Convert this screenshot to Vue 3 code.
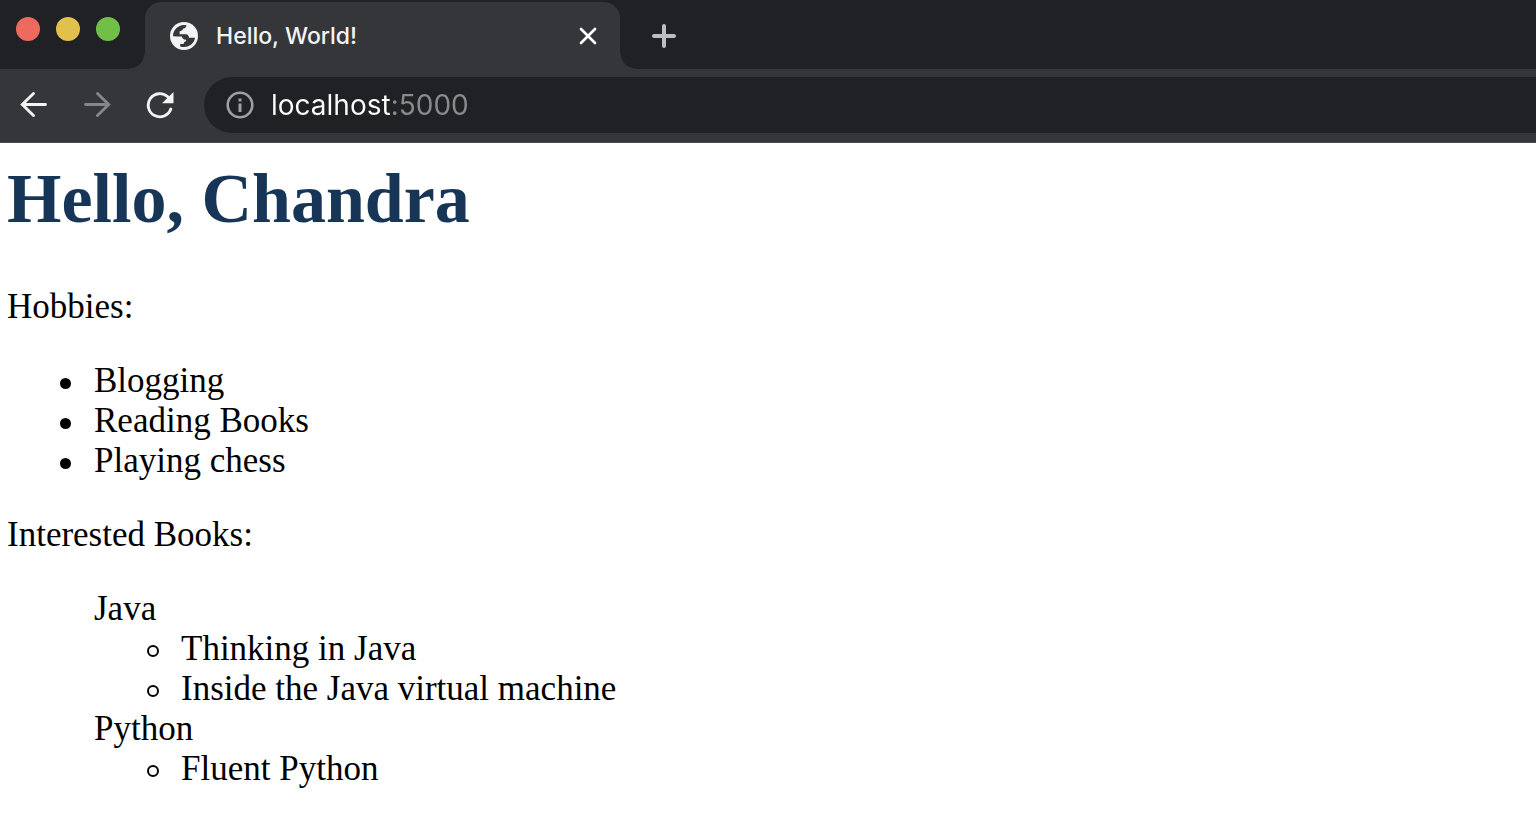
<script setup>
import { ref } from 'vue'

const address = ref('localhost:5000')
const hobbies = ['Blogging', 'Reading Books', 'Playing chess']
const books = [
  { topic: 'Java', titles: ['Thinking in Java', 'Inside the Java virtual machine'] },
  { topic: 'Python', titles: ['Fluent Python'] },
]
</script>

<template>
  <div class="browser">
    <header class="chrome">
      <div class="tab-strip">
        <div class="window-controls">
          <button class="light red" aria-label="Close window"></button>
          <button class="light yellow" aria-label="Minimize window"></button>
          <button class="light green" aria-label="Zoom window"></button>
        </div>
        <div class="tab">
          <svg class="favicon" viewBox="0 0 28 28" aria-hidden="true">
            <circle cx="14" cy="14" r="14" fill="#f1f3f4" />
            <path fill="#35363a" d="M3 14.2C3 8 8 3 14 3c1.200 0 2 .2 2.600.5-.3 1.500-1.300 3-3.600 3.300-.3 1.600-1.500 2.400-3.400 2.500v2.900h6.200c2.100 0 3 1.500 3.200 3.500h6C24.500 20.500 20 25 14 25c-1.500 0-2.700-.2-3.800-.6v-2.300h3.400c.2-1.900 1.100-2.700 2.500-2.900v-1.500c-2.600-.2-4-1.300-4.200-3.200C9 14.500 6 14.200 3 14.200z" />
          </svg>
          <span class="tab-title">Hello, World!</span>
          <button class="icon-button" aria-label="Close tab">
            <svg class="close-icon" viewBox="0 0 18 18" fill="none" stroke="#fff" stroke-width="2.700" stroke-linecap="round">
              <path d="M2 2l14 14M16 2L2 16" />
            </svg>
          </button>
        </div>
        <button class="icon-button new-tab" aria-label="New tab">
          <svg class="plus-icon" viewBox="0 0 24 24" fill="none" stroke="#bdbec4" stroke-width="4" stroke-linecap="round">
            <path d="M12 2v20M2 12h20" />
          </svg>
        </button>
      </div>

      <div class="toolbar">
        <nav class="nav-buttons" aria-label="Navigation">
          <button class="icon-button" aria-label="Back">
            <svg class="nav-icon" viewBox="0 0 28 28" fill="none" stroke="#f1f3f4" stroke-width="2.900" stroke-linecap="round">
              <path d="M25.500 13.500H3M13.500 2.500L2.300 13.500l11.200 11" />
            </svg>
          </button>
          <button class="icon-button" aria-label="Forward">
            <svg class="nav-icon" viewBox="0 0 28 28" fill="none" stroke="#858688" stroke-width="2.900" stroke-linecap="round">
              <path d="M2.500 13.500H25M14.500 2.500l11.200 11-11.200 11" />
            </svg>
          </button>
          <button class="icon-button" aria-label="Reload">
            <svg class="nav-icon" viewBox="0 0 28 28">
              <path d="M21.800 5.800A11.600 11.600 0 1 0 24.800 18" fill="none" stroke="#f1f3f4" stroke-width="2.900" stroke-linecap="round" />
              <path d="M27.500 1v11.300H16z" fill="#f1f3f4" />
            </svg>
          </button>
        </nav>
        <div class="omnibox">
          <button class="icon-button" aria-label="View site information">
            <svg class="nav-icon" viewBox="0 0 28 28">
              <circle cx="14" cy="14" r="12.300" fill="none" stroke="#9aa0a6" stroke-width="2.600" />
              <path d="M12.500 7.500h3v3h-3zM12.500 12.500h3v8.500h-3z" fill="#9aa0a6" />
            </svg>
          </button>
          <input v-model="address" class="address" type="text" aria-label="Address" spellcheck="false" />
        </div>
      </div>
    </header>

    <main class="page">
      <h1>Hello, Chandra</h1>
      <p>Hobbies:</p>
      <ul class="hobbies">
        <li v-for="hobby in hobbies" :key="hobby">{{ hobby }}</li>
      </ul>
      <p>Interested Books:</p>
      <ul class="topics">
        <li v-for="group in books" :key="group.topic">
          {{ group.topic }}
          <ul class="titles">
            <li v-for="title in group.titles" :key="title">{{ title }}</li>
          </ul>
        </li>
      </ul>
    </main>
  </div>
</template>

<style>
body {
  background: #fff;
}
</style>

<style scoped>
.chrome {
  font-family: Inter, sans-serif;
  background: #35363a;
  border-bottom: 1px solid #4b4a4d;
}
.tab-strip {
  display: flex;
  align-items: flex-end;
  height: 69px;
  background: #202124;
}
.window-controls {
  display: flex;
  align-self: flex-start;
  gap: 16px;
  width: 145px;
  padding: 17px 0 0 16px;
  box-sizing: border-box;
}
.light {
  width: 24px;
  height: 24px;
  padding: 0;
  border: 0;
  border-radius: 50%;
}
.red {
  background: #ee6a5f;
}
.yellow {
  background: #e1c04c;
}
.green {
  background: #71bf47;
}
.tab {
  position: relative;
  display: flex;
  align-items: center;
  width: 475px;
  height: 67px;
  padding: 0 20px 0 25px;
  box-sizing: border-box;
  border-radius: 16px 16px 0 0;
  background: #35363a;
}
.tab::before,
.tab::after {
  content: '';
  position: absolute;
  bottom: 0;
  width: 16px;
  height: 16px;
}
.tab::before {
  right: 100%;
  background: radial-gradient(circle at 0 0, #202124 15px, #35363a 16px);
}
.tab::after {
  left: 100%;
  background: radial-gradient(circle at 100% 0, #202124 15px, #35363a 16px);
}
.favicon {
  width: 28px;
  height: 28px;
}
.tab-title {
  flex: 1;
  margin-left: 18px;
  color: #f1f3f4;
  font-size: 23px;
  font-weight: 500;
  line-height: 32px;
}
.icon-button {
  display: flex;
  align-items: center;
  justify-content: center;
  padding: 0;
  border: 0;
  background: none;
}
.close-icon {
  width: 18px;
  height: 18px;
  padding: 3px;
}
.new-tab {
  height: 67px;
  margin-left: 32px;
}
.plus-icon {
  width: 24px;
  height: 24px;
}
.toolbar {
  display: flex;
  align-items: center;
  padding: 8px 0 9px 20px;
}
.nav-buttons {
  display: flex;
  gap: 35px;
  margin-right: 30px;
}
.nav-icon {
  width: 28px;
  height: 28px;
}
.omnibox {
  flex: 1;
  display: flex;
  align-items: center;
  height: 56px;
  padding-left: 22px;
  border-radius: 28px 0 0 28px;
  background: #202124;
}
.address {
  flex: 1;
  min-width: 0;
  height: 40px;
  margin-left: 17px;
  padding: 0;
  border: 0;
  outline: 0;
  font-family: inherit;
  font-size: 28px;
  color: transparent;
  caret-color: #fff;
  /* The host is bright and the port is dimmed. */
  background: linear-gradient(to right, #fff 119px, #8a8b8d 119px);
  background-clip: text;
}
.page {
  padding: 16px 7px 0;
  color: #000;
  font-family: 'Liberation Serif', 'Times New Roman', serif;
  font-size: 35px;
  line-height: 40px;
}
h1 {
  margin: 0 0 48px;
  color: #173657;
  font-size: 70px;
  line-height: 80px;
}
p {
  margin: 0 0 34px;
}
ul {
  margin: 0;
  padding-left: 87px;
  list-style: none;
}
.hobbies {
  margin-bottom: 34px;
}
.hobbies li::before,
.titles li::before {
  content: '';
  display: inline-block;
  box-sizing: border-box;
  width: 12px;
  height: 12px;
  margin: 0 22px 3px -34px;
  border: 2px solid #000;
  border-radius: 50%;
}
.hobbies li::before {
  width: 11px;
  height: 11px;
  margin-right: 23px;
  background: #000;
}
</style>
